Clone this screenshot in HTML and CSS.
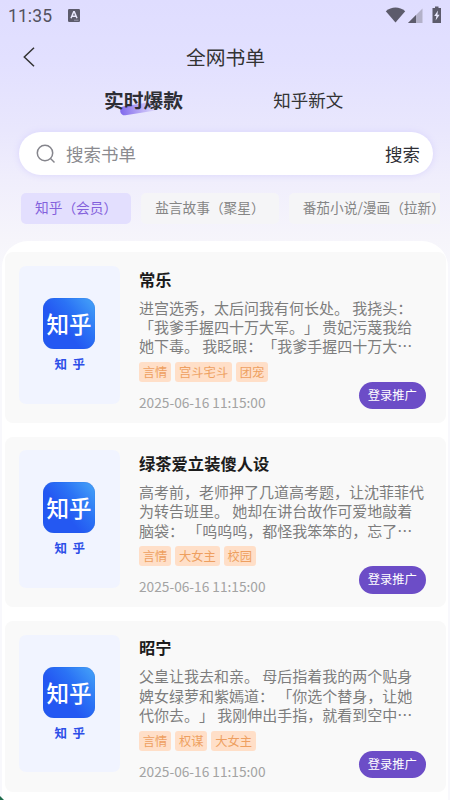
FILE: index.html
```html
<!DOCTYPE html>
<html lang="zh-CN">
<head>
<meta charset="utf-8">
<title>全网书单</title>
<link rel="stylesheet" href="styles.css">
</head>
<body>
<div class="screen">
  <div class="status">
    <span class="clock">11:35</span>
    <svg class="ime" viewBox="0 0 12 13"><rect width="12" height="13" rx="1.2" fill="#5c5b6b"/><path d="M3 9.2 5.7 2.8h.6L9 9.2M4 7.2h4" fill="none" stroke="#e8e7fb" stroke-width="1.5"/><path d="M6 11.2h4.5" stroke="#a9a8bb" stroke-width=".8"/></svg>
    <svg class="signals" viewBox="0 0 58 18">
      <path d="M.8 5.2C6.500.2 14.500.2 20.200 5.200L10.500 16.500Z" fill="#5c5b6b"/>
      <path d="M37.500 2.500V17H23Z" fill="#b3b1c9"/>
      <path d="M31 9V17H23Z" fill="#5c5b6b"/>
      <path d="M47.500 2h2.500V.6h3.500V2h2.500v15h-8.500V2z" fill="#5c5b6b"/>
      <path d="M53 4.500 49.200 10h2.200l-.8 4.500 4-5.700h-2.200z" fill="#e8e7fb"/>
    </svg>
  </div>
  <header class="navbar">
    <svg class="back" viewBox="0 0 12 20"><path d="M11 .8 1.300 10 11 19.200" fill="none" stroke="#333" stroke-width="1.500"/></svg>
    <h1 class="page-title">全网书单</h1>
  </header>
  <nav class="tabs">
    <span class="tab tab-active">实时爆款</span>
    <span class="tab">知乎新文</span>
  </nav>
  <div class="search">
    <svg class="search-icon" viewBox="0 0 20 20"><circle cx="9" cy="9" r="7.700"/><path d="m14.500 14.500 4 4"/></svg>
    <span class="placeholder">搜索书单</span>
    <span class="search-action">搜索</span>
  </div>
  <div class="chips">
    <span class="chip chip-active">知乎（会员）</span>
    <span class="chip">盐言故事（聚星）</span>
    <span class="chip chip-last">番茄小说/漫画（拉新<span class="half">）</span></span>
  </div>
  <main class="panel">
    <article class="card">
      <div class="cover"><div class="logo">知乎</div><div class="brand">知乎</div></div>
      <div class="info">
        <h2 class="book">常乐</h2>
        <p class="desc">进宫选秀，太后问我有何长处。 我挠头：<br>「我爹手握四十万大军。」 贵妃污蔑我给<br>她下毒。 我眨眼：「我爹手握四十万大…</p>
        <div class="tags"><span class="tag">言情</span><span class="tag">宫斗宅斗</span><span class="tag">团宠</span></div>
        <div class="foot"><time class="date">2025-06-16 11:15:00</time><span class="promo">登录推广</span></div>
      </div>
    </article>
    <article class="card">
      <div class="cover"><div class="logo">知乎</div><div class="brand">知乎</div></div>
      <div class="info">
        <h2 class="book">绿茶爱立装傻人设</h2>
        <p class="desc">高考前，老师押了几道高考题，让沈菲菲代<br>为转告班里。 她却在讲台故作可爱地敲着<br>脑袋： 「呜呜呜，都怪我笨笨的，忘了…</p>
        <div class="tags"><span class="tag">言情</span><span class="tag">大女主</span><span class="tag">校园</span></div>
        <div class="foot"><time class="date">2025-06-16 11:15:00</time><span class="promo">登录推广</span></div>
      </div>
    </article>
    <article class="card">
      <div class="cover"><div class="logo">知乎</div><div class="brand">知乎</div></div>
      <div class="info">
        <h2 class="book">昭宁</h2>
        <p class="desc">父皇让我去和亲。 母后指着我的两个贴身<br>婢女绿萝和紫嫣道： 「你选个替身，让她<br>代你去。」 我刚伸出手指，就看到空中…</p>
        <div class="tags"><span class="tag">言情</span><span class="tag">权谋</span><span class="tag">大女主</span></div>
        <div class="foot"><time class="date">2025-06-16 11:15:00</time><span class="promo">登录推广</span></div>
      </div>
    </article>
  </main>
  <span class="corner"></span>
</div>
</body>
</html>
```
FILE: styles.css
```css
* { box-sizing: border-box; }
body {
  margin: 0;
  font-family: "Noto Sans CJK SC", sans-serif;
  text-spacing-trim: space-all;
  background: #fff;
}
.screen {
  position: relative;
  width: 450px;
  height: 800px;
  overflow: hidden;
  display: flex;
  flex-direction: column;
  background: linear-gradient(#dfddff 0, #e2e0ff 60px, #e9e7fd 130px, #f0eefc 180px, #f6f5fb 240px, #f8f8fc 270px);
}
.status {
  height: 32px;
  display: flex;
  align-items: center;
  padding: 0 8px;
}
.clock {
  width: 60px;
  font: 400 17.5px/32px Roboto, sans-serif;
  letter-spacing: .1px;
  color: #53525f;
}
.ime { width: 12px; height: 13px; margin-top: -2px; }
.signals { width: 58px; height: 18px; margin: -3px -1px 0 auto; }
.navbar {
  height: 50px;
  display: grid;
  grid-template-columns: 12px 1fr 12px;
  align-items: center;
  padding: 0 22px 0 23px;
}
.back { width: 12px; height: 20px; }
.page-title {
  margin: 0;
  text-align: center;
  font-size: 19.8px;
  line-height: 30px;
  font-weight: 400;
  color: #333;
}
.tabs {
  height: 36px;
  display: flex;
  align-items: center;
  gap: 90px;
  padding-left: 104px;
}
.tab { position: relative; z-index: 0; font-size: 17.5px; line-height: 30px; color: #333; }
.tab-active { font-size: 19.8px; font-weight: 700; color: #2e2e35; }
.tab-active::after {
  content: "";
  position: absolute;
  z-index: -1;
  left: 16px;
  top: 19px;
  width: 38px;
  height: 9px;
  border-radius: 5px;
  background: linear-gradient(90deg, #8069ec, #b5a6f5 50%, #e6e4fd);
  transform: rotate(-9deg);
}
.search {
  margin: 14px 17px 0 19px;
  height: 43px;
  border-radius: 22px;
  background: #fff;
  box-shadow: 0 0 7px #d9d4fc;
  display: flex;
  align-items: center;
  padding: 0 13px 0 17px;
  font-size: 17.5px;
}
.search-icon {
  width: 20px;
  height: 20px;
  fill: none;
  stroke: #85858c;
  stroke-width: 1.5;
}
.placeholder { margin-left: 10px; color: #8b8b90; }
.search-action { margin-left: auto; color: #2f2f35; }
.chips {
  margin: 18px 10px 0 21px;
  height: 31px;
  display: flex;
  gap: 10px;
  overflow: hidden;
}
.chip {
  flex: none;
  padding: 0 14px;
  border-radius: 5px;
  background: #f5f5f7;
  font-size: 13.7px;
  line-height: 29px;
  color: #858585;
  white-space: nowrap;
}
.chip-last { padding-right: 4px; border-radius: 5px 0 0 5px; }
.half { font-feature-settings: "halt"; }
.chip-active { background: #e3dffe; color: #8361dc; }
.panel {
  flex: 1;
  margin: 17px 2px 0;
  padding: 11.4px 2px 0 3px;
  border-radius: 26px 26px 0 0;
  background: #fff;
  display: flex;
  flex-direction: column;
  gap: 13.8px;
}
.card {
  flex: none;
  height: 170.6px;
  display: flex;
  gap: 19px;
  padding: 13.7px 20px 0 14px;
  border-radius: 8px;
  background: #f9f9f9;
}
.cover {
  flex: none;
  width: 101px;
  height: 137.5px;
  border-radius: 7px;
  background: #f1f4ff;
  display: flex;
  flex-direction: column;
  align-items: center;
  padding-top: 32px;
}
.logo {
  width: 52px;
  height: 51px;
  margin-right: 1px;
  border-radius: 11px;
  background: linear-gradient(50deg, #2458f2 40%, #2b73f5 65%, #47a6f8);
  box-shadow: inset 0 0 1px #1c5bd0;
  color: #fff;
  font-size: 22.5px;
  font-weight: 500;
  line-height: 50px;
  text-align: center;
}
.brand {
  margin-top: 6px;
  padding-left: 6px;
  font-size: 12.5px;
  font-weight: 700;
  line-height: 18px;
  letter-spacing: 5.4px;
  color: #2c4ee8;
}
.info { flex: 1; min-width: 0; }
.book {
  margin: .6px 0 0;
  font-size: 16.3px;
  line-height: 24px;
  font-weight: 700;
  color: #1c1c1c;
}
.desc {
  margin: 7px 0 0;
  font-size: 15px;
  line-height: 19.4px;
  color: #7d7d7d;
  white-space: nowrap;
}
.tags { margin-top: 5.9px; display: flex; gap: 4px; }
.tag {
  height: 20px;
  padding: 0 3.8px;
  border-radius: 3px;
  background: #ffdfc8;
  color: #ee9f60;
  font-size: 12.3px;
  line-height: 20.5px;
}
.foot {
  display: flex;
  align-items: flex-start;
  justify-content: space-between;
}
.date { margin-top: 10px; font-size: 13.7px; line-height: 20px; color: #a3a3a3; }
.promo {
  width: 67.5px;
  height: 27.5px;
  border-radius: 14px;
  background: #6c4dc7;
  color: #fff;
  font-size: 12.3px;
  line-height: 27px;
  text-align: center;
}
.corner {
  position: absolute;
  left: 0;
  bottom: 0;
  width: 4px;
  height: 4px;
  background: #1d6b4b;
  clip-path: polygon(0 0, 100% 100%, 0 100%);
}
```
